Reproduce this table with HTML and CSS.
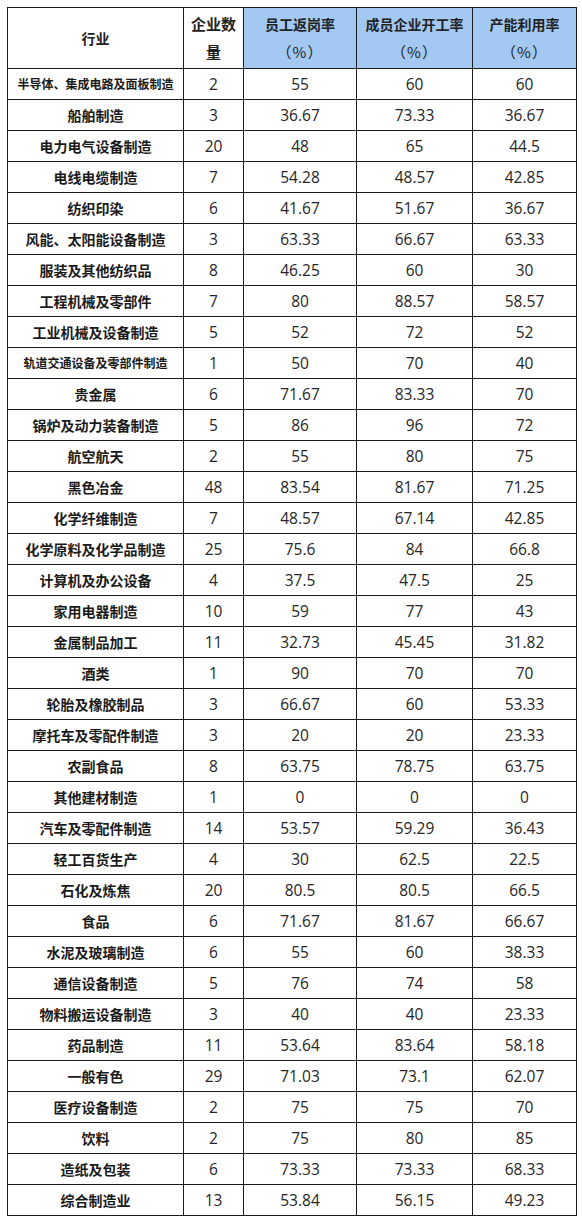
FILE: index.html
```html
<!DOCTYPE html>
<html lang="zh-CN">
<head>
<meta charset="utf-8">
<title>行业数据</title>
<link rel="stylesheet" href="styles.css">
</head>
<body>
<table class="data">
  <colgroup>
    <col class="c-ind"><col class="c-cnt"><col class="c-a"><col class="c-b"><col class="c-c">
  </colgroup>
  <thead>
    <tr>
      <th>行业</th>
      <th>企业数量</th>
      <th class="blue">员工返岗率<br><span class="pct">（%）</span></th>
      <th class="blue">成员企业开工率<br><span class="pct">（%）</span></th>
      <th class="blue">产能利用率<br><span class="pct">（%）</span></th>
    </tr>
  </thead>
  <tbody>
    <tr><td class="ind small">半导体、集成电路及面板制造</td><td>2</td><td>55</td><td>60</td><td>60</td></tr>
    <tr><td class="ind">船舶制造</td><td>3</td><td>36.67</td><td>73.33</td><td>36.67</td></tr>
    <tr><td class="ind">电力电气设备制造</td><td>20</td><td>48</td><td>65</td><td>44.5</td></tr>
    <tr><td class="ind">电线电缆制造</td><td>7</td><td>54.28</td><td>48.57</td><td>42.85</td></tr>
    <tr><td class="ind">纺织印染</td><td>6</td><td>41.67</td><td>51.67</td><td>36.67</td></tr>
    <tr><td class="ind">风能、太阳能设备制造</td><td>3</td><td>63.33</td><td>66.67</td><td>63.33</td></tr>
    <tr><td class="ind">服装及其他纺织品</td><td>8</td><td>46.25</td><td>60</td><td>30</td></tr>
    <tr><td class="ind">工程机械及零部件</td><td>7</td><td>80</td><td>88.57</td><td>58.57</td></tr>
    <tr><td class="ind">工业机械及设备制造</td><td>5</td><td>52</td><td>72</td><td>52</td></tr>
    <tr><td class="ind small">轨道交通设备及零部件制造</td><td>1</td><td>50</td><td>70</td><td>40</td></tr>
    <tr><td class="ind">贵金属</td><td>6</td><td>71.67</td><td>83.33</td><td>70</td></tr>
    <tr><td class="ind">锅炉及动力装备制造</td><td>5</td><td>86</td><td>96</td><td>72</td></tr>
    <tr><td class="ind">航空航天</td><td>2</td><td>55</td><td>80</td><td>75</td></tr>
    <tr><td class="ind">黑色冶金</td><td>48</td><td>83.54</td><td>81.67</td><td>71.25</td></tr>
    <tr><td class="ind">化学纤维制造</td><td>7</td><td>48.57</td><td>67.14</td><td>42.85</td></tr>
    <tr><td class="ind">化学原料及化学品制造</td><td>25</td><td>75.6</td><td>84</td><td>66.8</td></tr>
    <tr><td class="ind">计算机及办公设备</td><td>4</td><td>37.5</td><td>47.5</td><td>25</td></tr>
    <tr><td class="ind">家用电器制造</td><td>10</td><td>59</td><td>77</td><td>43</td></tr>
    <tr><td class="ind">金属制品加工</td><td>11</td><td>32.73</td><td>45.45</td><td>31.82</td></tr>
    <tr><td class="ind">酒类</td><td>1</td><td>90</td><td>70</td><td>70</td></tr>
    <tr><td class="ind">轮胎及橡胶制品</td><td>3</td><td>66.67</td><td>60</td><td>53.33</td></tr>
    <tr><td class="ind">摩托车及零配件制造</td><td>3</td><td>20</td><td>20</td><td>23.33</td></tr>
    <tr><td class="ind">农副食品</td><td>8</td><td>63.75</td><td>78.75</td><td>63.75</td></tr>
    <tr><td class="ind">其他建材制造</td><td>1</td><td>0</td><td>0</td><td>0</td></tr>
    <tr><td class="ind">汽车及零配件制造</td><td>14</td><td>53.57</td><td>59.29</td><td>36.43</td></tr>
    <tr><td class="ind">轻工百货生产</td><td>4</td><td>30</td><td>62.5</td><td>22.5</td></tr>
    <tr><td class="ind">石化及炼焦</td><td>20</td><td>80.5</td><td>80.5</td><td>66.5</td></tr>
    <tr><td class="ind">食品</td><td>6</td><td>71.67</td><td>81.67</td><td>66.67</td></tr>
    <tr><td class="ind">水泥及玻璃制造</td><td>6</td><td>55</td><td>60</td><td>38.33</td></tr>
    <tr><td class="ind">通信设备制造</td><td>5</td><td>76</td><td>74</td><td>58</td></tr>
    <tr><td class="ind">物料搬运设备制造</td><td>3</td><td>40</td><td>40</td><td>23.33</td></tr>
    <tr><td class="ind">药品制造</td><td>11</td><td>53.64</td><td>83.64</td><td>58.18</td></tr>
    <tr><td class="ind">一般有色</td><td>29</td><td>71.03</td><td>73.1</td><td>62.07</td></tr>
    <tr><td class="ind">医疗设备制造</td><td>2</td><td>75</td><td>75</td><td>70</td></tr>
    <tr><td class="ind">饮料</td><td>2</td><td>75</td><td>80</td><td>85</td></tr>
    <tr><td class="ind">造纸及包装</td><td>6</td><td>73.33</td><td>73.33</td><td>68.33</td></tr>
    <tr><td class="ind">综合制造业</td><td>13</td><td>53.84</td><td>56.15</td><td>49.23</td></tr>
  </tbody>
</table>
</body>
</html>
```

FILE: styles.css
```css
html, body {
  margin: 0;
  padding: 0;
  background: #ffffff;
}

body {
  padding: 7px 0 0 7px;
}

.data {
  border-collapse: collapse;
  table-layout: fixed;
  width: 570px;
  color: #1e1e1e;
  font-family: "Open Sans", "Noto Sans CJK SC", sans-serif;
}

.c-ind { width: 176px; }
.c-cnt { width: 60px; }
.c-a { width: 113px; }
.c-b { width: 116px; }
.c-c { width: 104px; }

.data th,
.data td {
  border: 1px solid #1a1a1a;
  text-align: center;
  vertical-align: middle;
  padding: 0 2px;
}

.data th {
  height: 60px;
  font-family: "Noto Sans CJK SC", sans-serif;
  font-weight: bold;
  font-size: 14px;
  line-height: 28px;
  color: #222;
  text-spacing-trim: space-all;
}

.data th .pct {
  font-weight: normal;
  font-size: 15px;
  letter-spacing: 1px;
  text-spacing-trim: space-all;
}

.data th:nth-child(2) {
  font-size: 15px;
  padding: 0 6px;
}

.data th.blue {
  background: #a3c8f2;
}

.data td {
  height: 30px;
  font-size: 15.5px;
  line-height: 20px;
  color: #262626;
}

.data td.ind {
  font-family: "Noto Sans CJK SC", sans-serif;
  font-weight: bold;
  font-size: 14px;
  color: #1a1a1a;
  white-space: nowrap;
}

.data td.ind.small {
  font-size: 12px;
}
```
